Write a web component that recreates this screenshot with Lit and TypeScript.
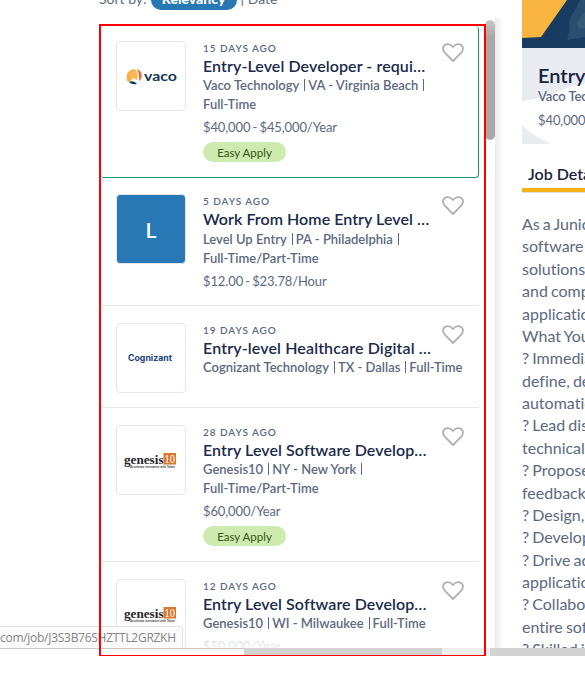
import { LitElement, html, css, svg, nothing } from "lit";
import { customElement, property } from "lit/decorators.js";

type Job = {
  age: string; title: string; meta: string[][]; pay?: string; easy?: boolean;
  logo: string; size: string;
};

const jobs: Job[] = [
  { age: "15 DAYS AGO", title: "Entry-Level Developer - requi…", meta: [["Vaco Technology", "VA - Virginia Beach", ""], ["Full-Time"]], pay: "$40,000 - $45,000/Year", easy: true, logo: "vaco", size: "first" },
  { age: "5 DAYS AGO", title: "Work From Home Entry Level …", meta: [["Level Up Entry", "PA - Philadelphia", ""], ["Full-Time/Part-Time"]], pay: "$12.00 - $23.78/Hour", logo: "letter", size: "second" },
  { age: "19 DAYS AGO", title: "Entry-level Healthcare Digital …", meta: [["Cognizant Technology", "TX - Dallas", "Full-Time"]], logo: "cognizant", size: "third" },
  { age: "28 DAYS AGO", title: "Entry Level Software Develop…", meta: [["Genesis10", "NY - New York", ""], ["Full-Time/Part-Time"]], pay: "$60,000/Year", easy: true, logo: "genesis", size: "fourth" },
  { age: "12 DAYS AGO", title: "Entry Level Software Develop…", meta: [["Genesis10", "WI - Milwaukee", "Full-Time"]], pay: "$50,000/Year", logo: "genesis", size: "fifth" },
];

const vaco = svg`
  <path d="M10 38C8 31 13 27 18 27L13 40C11 40 10 39 10 38Z" fill="#f9b04a"/>
  <path d="M18 27C21 30 21 35 20 38L16 36L13 40Z" fill="#fbb653"/>
  <path d="M20 27C26 29 26 37 22 39C22 35 22 31 20 27Z" fill="#e8703a"/>
  <path d="M12 40Q17 38 20 42Q15 43 12 40Z" fill="#0d3857"/>
  <text x="27" y="38.5" class="vaco" textLength="33" lengthAdjust="spacingAndGlyphs">vaco</text>`;
const cognizant = svg`<text x="11" y="36.5" class="cog" textLength="44" lengthAdjust="spacingAndGlyphs">Cognizant</text>`;
const genesis = svg`
  <text x="7" y="37.5" class="gen" textLength="39.5" lengthAdjust="spacingAndGlyphs">genesis</text>
  <rect x="46.5" y="27" width="12.5" height="11.5" fill="#d9782f"/>
  <text x="47.5" y="37" class="ten" textLength="10.5" lengthAdjust="spacingAndGlyphs">10</text>
  <text x="13" y="41.5" class="tag" textLength="45" lengthAdjust="spacingAndGlyphs">Accelerate innovation with Talent</text>`;

@customElement("job-card")
class JobCard extends LitElement {
  @property({ attribute: false }) job!: Job;
  static styles = css`
    :host { display: flex; flex: none; box-sizing: border-box; width: 378px; padding: 17px 0 0 15px; border-bottom: 1px solid #e6e7e9; font-family: Lato, sans-serif; font-variant-ligatures: none; color: #5d6880; }
    :host(.first) { height: 152px; padding-top: 15px; border: solid #14966f; border-width: 0 1px 1px 0; border-radius: 3px 4px 4px 3px; }
    :host(.second) { height: 128px; padding-top: 16px; }
    :host(.third) { height: 102px; }
    :host(.fourth) { height: 154px; }
    :host(.fifth) { height: 110px; }
    .logo { box-sizing: border-box; width: 70px; height: 70px; border: 1px solid #e7e7e9; border-radius: 4px; flex: none; background: #fff; overflow: hidden; }
    .logo svg { display: block; width: 68px; height: 68px; }
    .letter { background: #2878b5; color: #fff; font-size: 21px; font-weight: 600; line-height: 69px; text-align: center; }
    .body { margin-left: 17px; width: 262px; flex: none; white-space: nowrap; }
    .age { font-size: 10px; line-height: 14px; letter-spacing: .95px; font-weight: 600; }
    .title { font-size: 16px; line-height: 21px; height: 20px; font-weight: 600; letter-spacing: .08px; color: #1b2a4a; }
    :host(.second) .title { height: 21px; letter-spacing: .05px; }
    :host(.third) .title { letter-spacing: .13px; }
    .meta { display: flex; align-items: center; height: 19px; font-size: 13px; font-weight: 600; }
    .bar { width: 1px; height: 12px; background: #5d6880; margin: 0 3px 0 5px; }
    .pay { font-size: 13px; line-height: 20px; margin-top: 4px; letter-spacing: -.12px; word-spacing: -1px; }
    .easy { margin-top: 5px; width: 83px; height: 20px; border-radius: 10px; background: #cdebae; color: #345519; font-size: 11.5px; line-height: 22px; text-align: center; }
    .heart { margin: 2px 0 0 -23px; width: 22px; height: 20px; flex: none; }
    .vaco { font: 700 14px Lato, sans-serif; fill: #153650; }
    .cog { font: 700 8.5px Inter, sans-serif; fill: #203f80; }
    .gen { font: 700 12px "Liberation Serif", serif; fill: #28262a; }
    .ten { font: 12px "Liberation Serif", serif; fill: #fff; }
    .tag { font: italic 700 3px "Liberation Sans", sans-serif; fill: #444; }
  `;
  render() {
    const j = this.job;
    const mark = j.logo === "vaco" ? vaco : j.logo === "cognizant" ? cognizant : genesis;
    return html`
      ${j.logo === "letter" ? html`<div class="logo letter">L</div>` : html`<div class="logo"><svg viewBox="0 0 68 68">${mark}</svg></div>`}
      <div class="body">
        <div class="age">${j.age}</div>
        <div class="title">${j.title}</div>
        ${j.meta.map(line => html`<div class="meta">${line.map((t, i) => html`${i ? html`<span class="bar"></span>` : nothing}<span>${t}</span>`)}</div>`)}
        ${j.pay ? html`<div class="pay">${j.pay}</div>` : nothing}
        ${j.easy ? html`<div class="easy">Easy Apply</div>` : nothing}
      </div>
      <svg class="heart" viewBox="0 0 22 20"><path d="M11 18L2.8 9.7C-1 5 2 1.2 5.8 1.2C8.2 1.2 9.6 2.4 11 4C12.4 2.4 13.8 1.2 16.2 1.2C20 1.2 23 5 19.2 9.7Z" fill="none" stroke="#b0b0b0" stroke-width="1.8" stroke-linejoin="round"/></svg>`;
  }
}

const description = ["As a Junior Developer", "software engineering", "solutions for clients", "and complex business", "applications.", "What You Will Do:", "? Immediately help", "define, develop and", "automation tools", "? Lead discussions", "technical teams", "? Propose and give", "feedback to teams", "? Design, build and", "? Develop software", "? Drive adoption of", "applications and", "? Collaborate with", "entire software", "? Skilled in coding"];

@customElement("app-root")
class AppRoot extends LitElement {
  static styles = css`
    :host { display: block; position: relative; width: 585px; height: 681px; overflow: hidden; background: #fff; font-family: Lato, sans-serif; font-variant-ligatures: none; color: #5d6880; }
    .page { display: flex; height: 648px; overflow: hidden; }
    .list { width: 387px; margin-left: 99px; flex: none; overflow: hidden; }
    .sort { display: flex; height: 24px; font-size: 14px; line-height: 18px; white-space: nowrap; }
    .sort span { margin-top: -10px; }
    .sort .pill { box-sizing: border-box; width: 86px; height: 20px; margin: -10px 4px 0 4px; border-radius: 10px; background: #2878b5; color: #fff; font-weight: 900; text-align: center; }
    .cards { display: flex; flex-direction: column; padding: 2px 0 0 2px; }
    .track { width: 9px; flex: none; padding-top: 20px; }
    .thumb { height: 120px; margin-left: -1px; border-radius: 5px; background: linear-gradient(#c9c9c9, #a9a9a9 16px); width: 10px; }
    .shade { width: 9px; margin-top: 18px; flex: none; background: linear-gradient(90deg, #eaeaea, #fff); }
    .detail { width: 63px; margin-left: 18px; flex: none; overflow: hidden; white-space: nowrap; }
    .hero { display: block; width: 63px; height: 48px; }
    .head { display: grid; height: 96px; background: #e8ecf0; }
    .head > * { grid-area: 1 / 1; min-width: 0; }
    .swoosh { width: 63px; height: 96px; }
    .summary { padding: 15px 0 0 16px; overflow: hidden; }
    .name { font-size: 20px; line-height: 24px; font-weight: 600; color: #16213e; }
    .firm { font-size: 13px; line-height: 18px; font-weight: 600; letter-spacing: -.1px; }
    .wage { font-size: 13px; line-height: 18px; margin-top: 6px; letter-spacing: -.1px; }
    .tab { height: 44px; box-sizing: border-box; padding: 19px 0 0 6px; font-size: 16px; line-height: 21px; font-weight: 600; color: #1b2340; }
    .rule { height: 4px; background: #f7b21a; border-bottom: 1px solid #dfe2e5; }
    .copy { margin-top: 20px; font-size: 16px; line-height: 22.38px; word-spacing: -1px; }
    .foot { display: grid; grid-template-columns: 244px 198px 48px 1fr; height: 8px; background: #fff; }
    .foot .grey { background: #d3d3d3; }
    .foot .light { background: #eee; }
    .foot .edge { border-top: 1px solid #c7c7c7; }
    .status { position: absolute; left: 0; top: 626px; width: 182px; height: 21px; border: solid #e2e3e5; border-width: 1px 1px 0 0; border-radius: 0 4px 0 0; background: rgba(251,251,251,.95); font: 12px/21px "Open Sans", sans-serif; letter-spacing: -.28px; color: #858585; white-space: nowrap; }
    .fade { position: absolute; left: 186px; top: 632px; width: 298px; height: 16px; background: linear-gradient(rgba(255,255,255,.6), rgba(255,255,255,.9)); }
    .frame { position: absolute; left: 99px; top: 24px; width: 383px; height: 629px; border: solid #f00; border-width: 2px 2px 1px; }
  `;
  render() {
    return html`
      <div class="page">
        <div class="list">
          <div class="sort"><span>Sort by:</span><div class="pill">Relevancy</div><span>| Date</span></div>
          <div class="cards">${jobs.map(j => html`<job-card class=${j.size} .job=${j}></job-card>`)}</div>
        </div>
        <div class="track"><div class="thumb"></div></div>
        <div class="shade"></div>
        <div class="detail">
          <svg class="hero" viewBox="0 0 63 48"><rect width="63" height="48" fill="#173b61"/><path d="M0 0H45L19 37L0 38Z" fill="#f9b440"/><path d="M58 0Q55 8 49 16Q46 22 48 30Q44 37 46 40L63 37V0Z" fill="#294e70"/><path d="M63 12L55 23L57 29L63 28Z" fill="#355977"/></svg>
          <div class="head">
            <svg class="swoosh" viewBox="0 0 63 96"><path d="M0 53Q20 51 40 42Q52 37 63 35V96H29Q11 88 0 77Z" fill="#fff"/></svg>
            <div class="summary"><div class="name">Entry-Level</div><div class="firm">Vaco Technology</div><div class="wage">$40,000 - $45,000</div></div>
          </div>
          <div class="tab">Job Details</div><div class="rule"></div>
          <div class="copy">${description.map(t => html`<div>${t}</div>`)}</div>
        </div>
      </div>
      <div class="foot"><div class="edge"></div><div class="grey"></div><div class="light"></div><div class="grey"></div></div>
      <div class="fade"></div>
      <div class="status">com/job/J3S3B76SHZTTL2GRZKH</div>
      <div class="frame"></div>`;
  }
}
